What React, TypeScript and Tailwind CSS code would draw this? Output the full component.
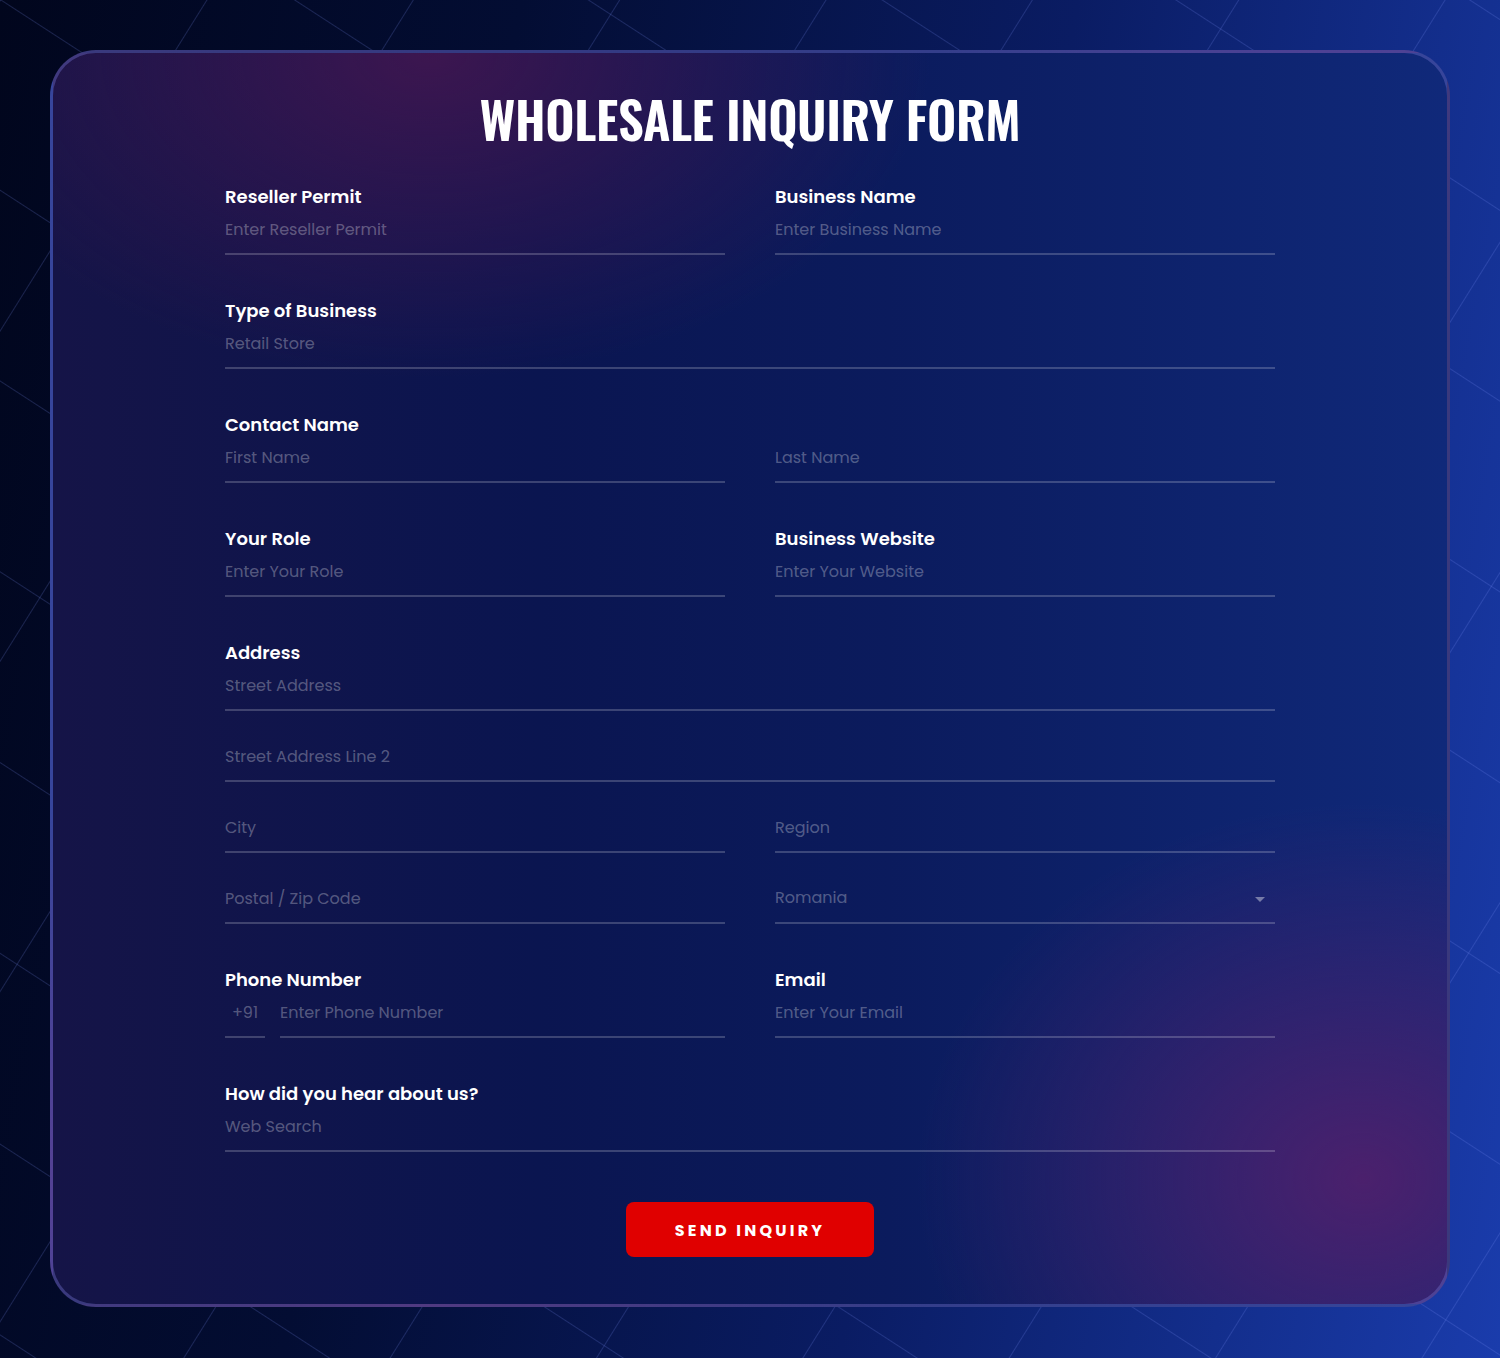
import { ChangeEvent, useState } from "react";

const body = "font-['Poppins','Inter','Noto_Sans',sans-serif]";

function Label({ children }: { children: React.ReactNode }) {
  return <label className="block text-lg font-semibold leading-6 text-white">{children}</label>;
}

function Input({ placeholder, width = "w-full", align = "" }: { placeholder: string; width?: string; align?: string }) {
  return (
    <input
      placeholder={placeholder}
      className={
        "block h-[46px] border-b-2 border-white/20 bg-transparent pt-2 pb-3 text-base leading-6 text-white outline-none placeholder:text-white/30 " +
        width +
        " " +
        align
      }
    />
  );
}

function CountrySelect() {
  const [country, setCountry] = useState("Romania");
  return (
    <div className="relative">
      <select
        value={country}
        onChange={(e: ChangeEvent<HTMLSelectElement>) => setCountry(e.target.value)}
        className="block h-[46px] w-full appearance-none border-b-2 border-white/20 bg-transparent pt-2 pb-3 text-base leading-6 text-white/30 outline-none"
      >
        <option className="text-black">Romania</option>
        <option className="text-black">Bulgaria</option>
        <option className="text-black">Hungary</option>
      </select>
      {/* caret */}
      <svg className="pointer-events-none absolute right-[10px] top-[19px] h-[5px] w-[10px]" viewBox="0 0 10 5">
        <path d="M0 0h10L5 5z" fill="rgba(255,255,255,0.4)" />
      </svg>
    </div>
  );
}

function GridLines() {
  return (
    <svg className="pointer-events-none absolute inset-0 h-full w-full" aria-hidden>
      <defs>
        <pattern id="la" width="175" height="175" patternUnits="userSpaceOnUse" patternTransform="rotate(32)">
          <line x1="0" y1="0" x2="0" y2="175" stroke="rgba(130,150,255,0.2)" strokeWidth="2" />
        </pattern>
        <pattern id="lb" width="160" height="160" patternUnits="userSpaceOnUse" patternTransform="rotate(-57)">
          <line x1="0" y1="0" x2="0" y2="160" stroke="rgba(130,150,255,0.2)" strokeWidth="2" />
        </pattern>
      </defs>
      <rect width="100%" height="100%" fill="url(#la)" />
      <rect width="100%" height="100%" fill="url(#lb)" />
    </svg>
  );
}

export default function App() {
  return (
    <div
      className={
        "relative min-h-[1358px] overflow-hidden bg-[linear-gradient(100deg,#01061d_0%,#030d33_30%,#0a1c63_62%,#1a3cac_100%)] p-[50px] " +
        body
      }
    >
      <GridLines />

      <div className="relative rounded-[46px] border-[3px] border-[rgba(110,110,200,0.42)] bg-[radial-gradient(36%_26%_at_27%_0%,rgba(72,22,80,0.8),transparent),radial-gradient(32%_30%_at_94%_90%,rgba(78,32,108,0.95),transparent),linear-gradient(90deg,#151447_0%,#0a1550_35%,#0b1b5d_60%,#10297a_100%)] px-[172px] pt-[39px] pb-[47px]">
        <h1 className="mb-[40px] text-center font-['Oswald','Liberation_Sans_Narrow','DejaVu_Sans_Condensed',sans-serif] text-[51px] leading-[53px] font-semibold tracking-[-0.4px] text-white">
          WHOLESALE INQUIRY FORM
        </h1>

        <form className="flex flex-col gap-[44px]" onSubmit={(e) => e.preventDefault()}>
          <div className="grid grid-cols-2 gap-x-[50px]">
            <div>
              <Label>Reseller Permit</Label>
              <Input placeholder="Enter Reseller Permit" />
            </div>
            <div>
              <Label>Business Name</Label>
              <Input placeholder="Enter Business Name" />
            </div>
          </div>

          <div>
            <Label>Type of Business</Label>
            <Input placeholder="Retail Store" />
          </div>

          <div>
            <Label>Contact Name</Label>
            <div className="grid grid-cols-2 gap-x-[50px]">
              <Input placeholder="First Name" />
              <Input placeholder="Last Name" />
            </div>
          </div>

          <div className="grid grid-cols-2 gap-x-[50px]">
            <div>
              <Label>Your Role</Label>
              <Input placeholder="Enter Your Role" />
            </div>
            <div>
              <Label>Business Website</Label>
              <Input placeholder="Enter Your Website" />
            </div>
          </div>

          <div className="flex flex-col gap-[25px]">
            <div>
              <Label>Address</Label>
              <Input placeholder="Street Address" />
            </div>
            <Input placeholder="Street Address Line 2" />
            <div className="grid grid-cols-2 gap-x-[50px]">
              <Input placeholder="City" />
              <Input placeholder="Region" />
            </div>
            <div className="grid grid-cols-2 gap-x-[50px]">
              <Input placeholder="Postal / Zip Code" />
              <CountrySelect />
            </div>
          </div>

          <div className="grid grid-cols-2 gap-x-[50px]">
            <div>
              <Label>Phone Number</Label>
              <div className="flex gap-[15px]">
                <Input placeholder="+91" width="w-[40px] shrink-0" align="text-center" />
                <Input placeholder="Enter Phone Number" width="min-w-0 flex-1" />
              </div>
            </div>
            <div>
              <Label>Email</Label>
              <Input placeholder="Enter Your Email" />
            </div>
          </div>

          <div>
            <Label>How did you hear about us?</Label>
            <Input placeholder="Web Search" />
          </div>

          <div className="mt-[6px] flex justify-center">
            <button
              type="submit"
              className="h-[55px] w-[248px] rounded-lg bg-[#e00000] pt-[2px] text-base font-bold tracking-[0.2em] text-white uppercase"
            >
              Send Inquiry
            </button>
          </div>
        </form>
      </div>
    </div>
  );
}
